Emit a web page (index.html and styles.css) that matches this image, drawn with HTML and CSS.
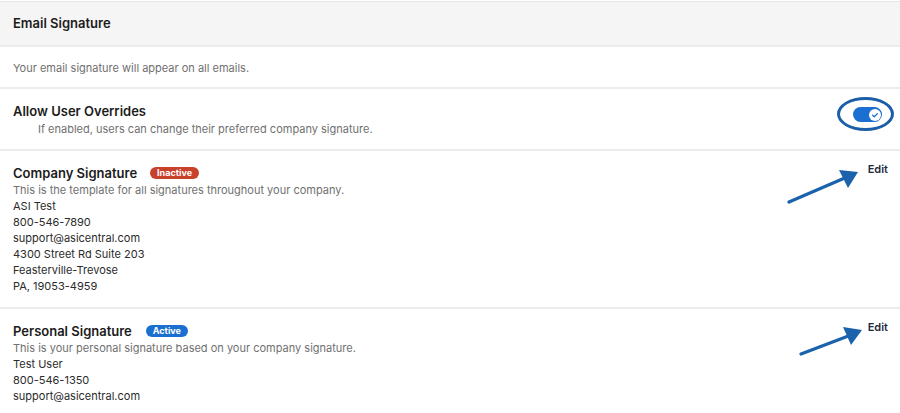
FILE: index.html
```html
<!DOCTYPE html>
<html>
<head>
<meta charset="utf-8">
<link rel="stylesheet" href="styles.css">
</head>
<body>
<div class="panel">
  <div class="header">Email Signature</div>
  <div class="row desc-row">Your email signature will appear on all emails.</div>
  <div class="row split overrides">
    <div>
      <div class="title">Allow User Overrides</div>
      <div class="sub indent">If enabled, users can change their preferred company signature.</div>
    </div>
    <div class="toggle-wrap">
      <span class="toggle"><span class="knob"><svg width="10" height="10" viewBox="0 0 10 10"><path d="M2.6 5.2 L4.3 6.8 L7.4 3.6" fill="none" stroke="#1a6fd0" stroke-width="1.3" stroke-linecap="round" stroke-linejoin="round"/></svg></span></span>
      <span class="ring"></span>
    </div>
  </div>
  <div class="row split sig">
    <div>
      <div class="title">Company Signature <span class="badge inactive">Inactive</span></div>
      <div class="sub">This is the template for all signatures throughout your company.</div>
      <div class="line">ASI Test</div>
      <div class="line">800-546-7890</div>
      <div class="line">support@asicentral.com</div>
      <div class="line">4300 Street Rd Suite 203</div>
      <div class="line">Feasterville-Trevose</div>
      <div class="line">PA, 19053-4959</div>
    </div>
    <a class="edit">Edit</a>
    <svg class="arrow arrow1" width="80" height="40" viewBox="0 0 80 40"><line x1="2" y1="36" x2="60" y2="11" stroke="#1b62ad" stroke-width="3.2" stroke-linecap="round"/><polygon points="71,6 52,4 61,22" fill="#1b62ad"/></svg>
  </div>
  <div class="row split sig last">
    <div>
      <div class="title">Personal Signature <span class="badge active">Active</span></div>
      <div class="sub">This is your personal signature based on your company signature.</div>
      <div class="line">Test User</div>
      <div class="line">800-546-1350</div>
      <div class="line">support@asicentral.com</div>
    </div>
    <a class="edit">Edit</a>
    <svg class="arrow arrow2" width="80" height="40" viewBox="0 0 80 40"><line x1="2" y1="33" x2="52" y2="14" stroke="#1b62ad" stroke-width="3.2" stroke-linecap="round"/><polygon points="63,9 44,6 52,24" fill="#1b62ad"/></svg>
  </div>
</div>
</body>
</html>
```
FILE: styles.css
```css
* { box-sizing: border-box; }
html, body { margin: 0; padding: 0; background: #fff; }
body {
  font-family: Inter, "Noto Sans", "Liberation Sans", sans-serif;
  color: #2b2b2b;
  font-size: 11px;
}
.panel {
  border-top: 1px solid #e6e6e6;
  margin-top: 1px;
}
.header {
  background: #f5f5f5;
  height: 45px;
  line-height: 43px;
  padding-left: 13px;
  font-weight: 600;
  font-size: 13px;
  color: #1c1c1c;
  border-bottom: 2px solid #ececec;
}
.row {
  padding: 0 12px 0 13px;
  border-bottom: 2px solid #ececec;
  position: relative;
}
.desc-row {
  height: 42px;
  line-height: 42px;
  color: #6f6f6f;
}
.split {
  display: flex;
  justify-content: space-between;
  align-items: flex-start;
}
.overrides {
  padding-top: 14px;
  height: 62px;
}
.title {
  font-weight: 600;
  font-size: 13px;
  line-height: 16px;
  color: #1c1c1c;
  display: flex;
  align-items: center;
}
.sub {
  color: #707070;
  line-height: 16px;
  margin-top: 1px;
}
.indent { padding-left: 25px; margin-top: 2px; }
.line { line-height: 16px; color: #2b2b2b; }
.sig { padding-top: 14px; padding-bottom: 13px; }
.sig.last { border-bottom: none; }
.badge {
  display: inline-block;
  margin-left: 13px;
  font-size: 9px;
  font-weight: 700;
  color: #fff;
  border-radius: 8px;
  padding: 0 7px;
  line-height: 12px;
  height: 12px;
}
.inactive { background: #c8412b; }
.active { background: #1b6fd1; margin-left: 14px; }
.edit {
  font-weight: 600;
  font-size: 11px;
  color: #1e2b3c;
  margin-top: -3px;
  margin-right: 0;
}
.toggle-wrap {
  position: relative;
  width: 29px;
  height: 15px;
  margin-right: 6px;
  margin-top: 4px;
}
.toggle {
  display: block;
  width: 29px;
  height: 15px;
  border-radius: 8px;
  background: #1a6fd0;
  position: relative;
}
.knob {
  position: absolute;
  right: 1.5px;
  top: 1.5px;
  width: 12px;
  height: 12px;
  border-radius: 50%;
  background: #fff;
  display: flex;
  align-items: center;
  justify-content: center;
}
.ring {
  position: absolute;
  left: -16px;
  top: -10px;
  width: 57px;
  height: 34px;
  border: 3px solid #1b5fa9;
  border-radius: 50%;
}
.arrow { position: absolute; }
.arrow1 { left: 787px; top: 15px; }
.arrow2 { left: 799px; top: 12px; }
```
